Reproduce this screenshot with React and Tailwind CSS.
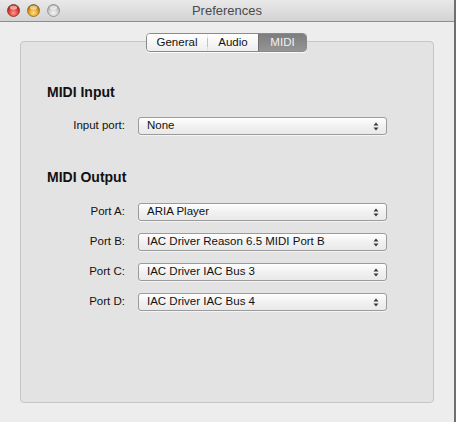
import React from 'react';

const font = { fontFamily: '"Liberation Sans", "DejaVu Sans", sans-serif' };

// little mac "traffic light" button
function Light({ id, top, mid, bottom, ring }) {
  return (
    <svg width="13" height="13" viewBox="0 0 13 13">
      <defs>
        <radialGradient id={id} cx="50%" cy="70%" r="60%">
          <stop offset="0%" stopColor={top} />
          <stop offset="60%" stopColor={mid} />
          <stop offset="100%" stopColor={bottom} />
        </radialGradient>
      </defs>
      <circle cx="6.5" cy="6.5" r="6" fill={`url(#${id})`} stroke={ring} strokeWidth="0.8" />
      <ellipse cx="6.5" cy="3.6" rx="3.6" ry="2.2" fill="#fff" opacity="0.55" />
    </svg>
  );
}

function Arrows() {
  return (
    <svg width="6" height="9" viewBox="0 0 6 9" className="shrink-0">
      <path d="M3 0.5 L5.5 3.5 H0.5 Z" fill="#3a3a3a" />
      <path d="M3 8.5 L5.5 5.5 H0.5 Z" fill="#3a3a3a" />
    </svg>
  );
}

function Row({ label, value }) {
  return (
    <div className="flex items-center h-[18px]">
      <div className="w-[78px] text-right text-[11.5px] text-[#111]">{label}</div>
      <div className="ml-[13px] w-[249px] h-[18px] flex items-center justify-between pl-[8px] pr-[7px] rounded-[3px] border border-[#9b9b9b] bg-[linear-gradient(#ffffff,#f1f1f1_50%,#e9e9e9)] shadow-[0_1px_0_rgba(255,255,255,0.6)]">
        <span className="text-[11.5px] text-[#111]">{value}</span>
        <Arrows />
      </div>
    </div>
  );
}

export default function App() {
  return (
    <div className="w-[456px] h-[422px] flex flex-col bg-[#ededed] border-r-2 border-[#6f6f6f] overflow-hidden" style={font}>
      {/* title bar */}
      <div className="relative h-[22px] shrink-0 flex items-center bg-[linear-gradient(#e9e9e9,#d3d3d3)] border-b border-[#8e8e8e]">
        <div className="flex items-center gap-[7px] pl-[7px]">
          <Light id="r" top="#ff9a8f" mid="#e2453c" bottom="#a8221a" ring="#8a2a24" />
          <Light id="y" top="#ffe08a" mid="#e8a523" bottom="#a76a10" ring="#8d6420" />
          <Light id="g" top="#f4f4f4" mid="#d0d0d0" bottom="#a8a8a8" ring="#8c8c8c" />
        </div>
        <div className="absolute inset-0 flex items-center justify-center text-[13px] text-[#4a4a4a]">Preferences</div>
      </div>

      {/* body */}
      <div className="flex-1 flex flex-col px-[20px] pt-[11px] pb-[19px]">
        <div className="relative z-10 flex justify-center pr-[1px]">
          <div className="flex h-[19px] rounded-[4px] border border-[#8a8a8a] overflow-hidden text-[11.5px] shadow-[0_1px_0_rgba(255,255,255,0.8)]">
            <div className="w-[60px] flex items-center justify-center bg-[linear-gradient(#ffffff,#eeeeee)] text-[#111]">General</div>
            <div className="w-px my-[4px] bg-[#c4c4c4]" />
            <div className="w-[50px] flex items-center justify-center bg-[linear-gradient(#ffffff,#eeeeee)] text-[#111]">Audio</div>
            <div className="w-[48px] flex items-center justify-center bg-[linear-gradient(#7d7d7d,#959595)] text-[#f2f2f2] border-l border-[#6f6f6f]">MIDI</div>
          </div>
        </div>

        <div className="-mt-[11px] flex-1 rounded-[4px] border border-[#c6c6c6] bg-[#e3e3e3] pl-[26px] pt-[42px]">
          <div className="text-[14px] font-bold text-[#111] h-[16px] leading-[16px]">MIDI Input</div>
          <div className="mt-[17px]">
            <Row label="Input port:" value="None" />
          </div>

          <div className="mt-[34px] text-[14px] font-bold text-[#111] h-[16px] leading-[16px]">MIDI Output</div>
          <div className="mt-[18px] flex flex-col gap-[12px]">
            <Row label="Port A:" value="ARIA Player" />
            <Row label="Port B:" value="IAC Driver Reason 6.5 MIDI Port B" />
            <Row label="Port C:" value="IAC Driver IAC Bus 3" />
            <Row label="Port D:" value="IAC Driver IAC Bus 4" />
          </div>
        </div>
      </div>
    </div>
  );
}
